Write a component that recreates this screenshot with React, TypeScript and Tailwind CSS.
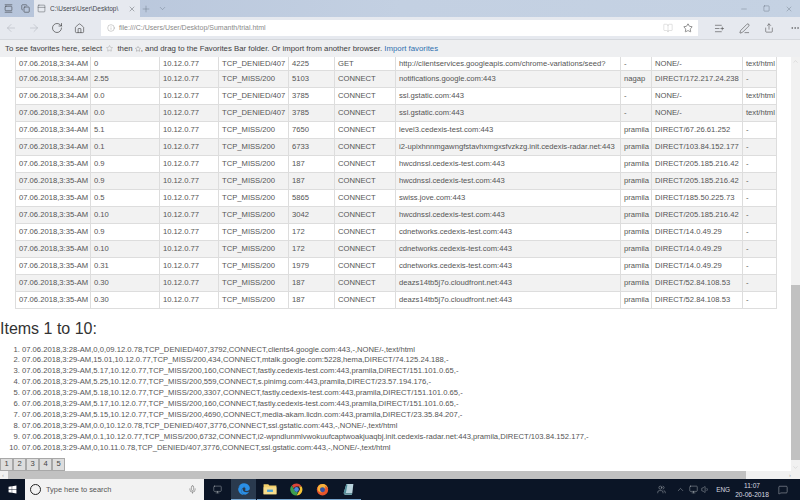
import React from 'react';
import {
  ArrowLeft, ArrowRight, RotateCw, Home, Info, BookOpen, Star, Share, MoreHorizontal, X, Plus, ChevronDown,
  ChevronUp, Minus, Square, Mic, PenLine, ListPlus, Volume1, MessageSquare, Users, Monitor, PanelTop, Copy, GalleryVertical,
} from 'lucide-react';
import { FaEdge, FaWindows } from 'react-icons/fa';

const rows = [
  ['07.06.2018,3:34-AM', '0', '10.12.0.77', 'TCP_DENIED/407', '4225', 'GET', 'http://clientservices.googleapis.com/chrome-variations/seed?', '-', 'NONE/-', 'text/html'],
  ['07.06.2018,3:34-AM', '2.55', '10.12.0.77', 'TCP_MISS/200', '5103', 'CONNECT', 'notifications.google.com:443', 'nagap', 'DIRECT/172.217.24.238', '-'],
  ['07.06.2018,3:34-AM', '0.0', '10.12.0.77', 'TCP_DENIED/407', '3785', 'CONNECT', 'ssl.gstatic.com:443', '-', 'NONE/-', 'text/html'],
  ['07.06.2018,3:34-AM', '0.0', '10.12.0.77', 'TCP_DENIED/407', '3785', 'CONNECT', 'ssl.gstatic.com:443', '-', 'NONE/-', 'text/html'],
  ['07.06.2018,3:34-AM', '5.1', '10.12.0.77', 'TCP_MISS/200', '7650', 'CONNECT', 'level3.cedexis-test.com:443', 'pramila', 'DIRECT/67.26.61.252', '-'],
  ['07.06.2018,3:34-AM', '0.1', '10.12.0.77', 'TCP_MISS/200', '6733', 'CONNECT', 'i2-upixhnnmgawngfstavhxmgxsfvzkzg.init.cedexis-radar.net:443', 'pramila', 'DIRECT/103.84.152.177', '-'],
  ['07.06.2018,3:35-AM', '0.9', '10.12.0.77', 'TCP_MISS/200', '187', 'CONNECT', 'hwcdnssl.cedexis-test.com:443', 'pramila', 'DIRECT/205.185.216.42', '-'],
  ['07.06.2018,3:35-AM', '0.9', '10.12.0.77', 'TCP_MISS/200', '187', 'CONNECT', 'hwcdnssl.cedexis-test.com:443', 'pramila', 'DIRECT/205.185.216.42', '-'],
  ['07.06.2018,3:35-AM', '0.5', '10.12.0.77', 'TCP_MISS/200', '5865', 'CONNECT', 'swiss.jove.com:443', 'pramila', 'DIRECT/185.50.225.73', '-'],
  ['07.06.2018,3:35-AM', '0.10', '10.12.0.77', 'TCP_MISS/200', '3042', 'CONNECT', 'hwcdnssl.cedexis-test.com:443', 'pramila', 'DIRECT/205.185.216.42', '-'],
  ['07.06.2018,3:35-AM', '0.9', '10.12.0.77', 'TCP_MISS/200', '172', 'CONNECT', 'cdnetworks.cedexis-test.com:443', 'pramila', 'DIRECT/14.0.49.29', '-'],
  ['07.06.2018,3:35-AM', '0.10', '10.12.0.77', 'TCP_MISS/200', '172', 'CONNECT', 'cdnetworks.cedexis-test.com:443', 'pramila', 'DIRECT/14.0.49.29', '-'],
  ['07.06.2018,3:35-AM', '0.31', '10.12.0.77', 'TCP_MISS/200', '1979', 'CONNECT', 'cdnetworks.cedexis-test.com:443', 'pramila', 'DIRECT/14.0.49.29', '-'],
  ['07.06.2018,3:35-AM', '0.30', '10.12.0.77', 'TCP_MISS/200', '187', 'CONNECT', 'deazs14tb5j7o.cloudfront.net:443', 'pramila', 'DIRECT/52.84.108.53', '-'],
  ['07.06.2018,3:35-AM', '0.30', '10.12.0.77', 'TCP_MISS/200', '187', 'CONNECT', 'deazs14tb5j7o.cloudfront.net:443', 'pramila', 'DIRECT/52.84.108.53', '-'],
];

const colWidths = [75, 69, 59, 70, 46, 61, 225, 31, 91, 34];

const items = [
  '07.06.2018,3:28-AM,0,0,09.12.0.78,TCP_DENIED/407,3792,CONNECT,clients4.google.com:443,-,NONE/-,text/html',
  '07.06.2018,3:29-AM,15.01,10.12.0.77,TCP_MISS/200,434,CONNECT,mtalk.google.com:5228,hema,DIRECT/74.125.24.188,-',
  '07.06.2018,3:29-AM,5.17,10.12.0.77,TCP_MISS/200,160,CONNECT,fastly.cedexis-test.com:443,pramila,DIRECT/151.101.0.65,-',
  '07.06.2018,3:29-AM,5.25,10.12.0.77,TCP_MISS/200,559,CONNECT,s.pinimg.com:443,pramila,DIRECT/23.57.194.176,-',
  '07.06.2018,3:29-AM,5.18,10.12.0.77,TCP_MISS/200,3307,CONNECT,fastly.cedexis-test.com:443,pramila,DIRECT/151.101.0.65,-',
  '07.06.2018,3:29-AM,5.17,10.12.0.77,TCP_MISS/200,160,CONNECT,fastly.cedexis-test.com:443,pramila,DIRECT/151.101.0.65,-',
  '07.06.2018,3:29-AM,5.15,10.12.0.77,TCP_MISS/200,4690,CONNECT,media-akam.licdn.com:443,pramila,DIRECT/23.35.84.207,-',
  '07.06.2018,3:29-AM,0.0,10.12.0.78,TCP_DENIED/407,3776,CONNECT,ssl.gstatic.com:443,-,NONE/-,text/html',
  '07.06.2018,3:29-AM,0.1,10.12.0.77,TCP_MISS/200,6732,CONNECT,i2-wpndlunmlvwokuufcaptwoakjuaqbj.init.cedexis-radar.net:443,pramila,DIRECT/103.84.152.177,-',
  '07.06.2018,3:29-AM,0,10.11.0.78,TCP_DENIED/407,3776,CONNECT,ssl.gstatic.com:443,-,NONE/-,text/html',
];

const ChromeLogo = () => (
  <svg viewBox="0 0 24 24" className="w-[13px] h-[13px]">
    <path d="M12 1a11 11 0 0 1 9.5 5.5H12a5.5 5.5 0 0 0-5.2 3.6L3.4 4.6A11 11 0 0 1 12 1z" fill="#d9453a" />
    <path d="M21.5 6.5A11 11 0 0 1 12 23l4.8-8.2a5.5 5.5 0 0 0-.7-8.3z" fill="#f3c335" />
    <path d="M12 23A11 11 0 0 1 3.4 4.6l4.8 8.6a5.5 5.5 0 0 0 6.3 3.2z" fill="#3d9e4f" />
    <circle cx="12" cy="12" r="4.4" fill="#4a89dc" />
  </svg>
);

const FirefoxLogo = () => (
  <svg viewBox="0 0 24 24" className="w-[13px] h-[13px]">
    <circle cx="12" cy="12.5" r="10.5" fill="#e8552b" />
    <path d="M4 6c2-4 7-5 10-4 4 1 7 4 8 8-2-3-4-4-6-4 1 1 2 3 1 5-2-2-6-2-8 0-1 2 0 5 3 6-4 1-8-1-9-5-.5-2 0-4 1-6z" fill="#f7b23b" />
    <circle cx="12" cy="12.5" r="4.6" fill="#3553a4" />
  </svg>
);

const ExplorerLogo = () => (
  <svg viewBox="0 0 24 24" className="w-[14px] h-[14px]">
    <path d="M1 4h8l2 2h12v15H1z" fill="#f3cf6a" />
    <rect x="1" y="9" width="22" height="12" fill="#f7dd8d" />
    <rect x="7" y="13" width="10" height="4" fill="#4aa3d8" />
  </svg>
);

const NotesLogo = () => (
  <svg viewBox="0 0 24 24" className="w-[13px] h-[13px]">
    <path d="M8 2h13l-2 17H3z" fill="#b9d3dc" />
    <path d="M3 19l5-17 2 1-3 16z" fill="#4c8a96" />
    <path d="M3 19h16l-1 3H5z" fill="#6f9fa8" />
  </svg>
);

const stroke = 1.3;

export default function App() {
  return (
    <div className="w-[800px] h-[500px] overflow-hidden flex flex-col bg-white font-['Liberation_Sans',Arial,sans-serif]">
      {/* tab strip */}
      <div className="h-[17px] flex items-center bg-gradient-to-r from-[#b6c4da] via-[#c3d0e2] to-[#c5d2e3] text-[#44484f]">
        <div className="w-[17px] flex justify-center"><GalleryVertical size={9} strokeWidth={1.6} /></div>
        <div className="w-[17px] flex justify-center"><Copy size={9} strokeWidth={1.6} /></div>
        <div className="h-full w-[106px] bg-[#e6e9ef] flex items-center pl-[3px] gap-[4px]">
          <PanelTop size={9} strokeWidth={1.2} />
          <span className="text-[6.5px] w-[74px] overflow-hidden whitespace-nowrap">C:\Users\User\Desktop\</span>
          <X size={8} strokeWidth={1.2} />
        </div>
        <Plus size={10} strokeWidth={1} className="ml-px text-[#5f6b7c]" />
        <ChevronDown size={9} strokeWidth={1} className="ml-[7px] text-[#5f6b7c]" />
        <div className="ml-auto flex items-center gap-[15px] pr-[7px] text-[#56606e]">
          <Minus size={8} strokeWidth={1} />
          <Square size={7} strokeWidth={1.2} />
          <X size={8} strokeWidth={1} />
        </div>
      </div>
      {/* address bar */}
      <div className="h-[23px] flex items-center bg-[#e6e9ef] text-[#3a3a3a] border-b border-[#d5d8dd]">
        <div className="flex items-center gap-[11px] pl-[5px] w-[101px]">
          <ArrowLeft size={12} strokeWidth={1} className="text-[#a9adb4]" />
          <ArrowRight size={12} strokeWidth={1} className="text-[#a9adb4]" />
          <RotateCw size={12} strokeWidth={stroke} />
          <Home size={11} strokeWidth={stroke} />
        </div>
        <div className="w-[597px] h-[16px] bg-white flex items-center pl-[6px] gap-[4px]">
          <Info size={8} strokeWidth={1} className="text-[#777]" />
          <span className="text-[7px] text-[#8a8a8a]">file:///C:/Users/User/Desktop/Sumanth/trial.html</span>
          <BookOpen size={10} strokeWidth={1} className="ml-auto text-[#b8b8b8]" />
          <Star size={10} strokeWidth={1.3} className="ml-[6px] mr-[5px]" />
        </div>
        <div className="flex items-center gap-[14px] pl-[16px]">
          <ListPlus size={11} strokeWidth={1.2} />
          <PenLine size={11} strokeWidth={1.2} />
          <Share size={10} strokeWidth={1.2} />
          <MoreHorizontal size={10} strokeWidth={1.2} className="ml-[2px]" />
        </div>
      </div>
      {/* favorites hint */}
      <div className="h-[17px] flex items-center pl-[5px] bg-[#eeeff1] text-[7.8px] text-[#3d3d3d] whitespace-nowrap">
        To see favorites here, select&nbsp;<Star size={7} strokeWidth={1} className="mx-[2px] text-[#777]" />&nbsp;then&nbsp;<Star size={6} strokeWidth={1.2} className="text-[#555]" />, and drag to the Favorites Bar folder. Or import from another browser.&nbsp;
        <span className="text-[#2f6fb0]">Import favorites</span>
      </div>

      <div className="flex-1 flex min-h-0">
        {/* page */}
        <div className="flex-1 min-w-0 overflow-hidden text-[#555]">
          <table className="ml-[15px] table-fixed border-collapse text-[7.65px] w-[761px]">
            <colgroup>
              {colWidths.map((w, i) => <col key={i} style={{ width: w }} />)}
            </colgroup>
            <tbody>
              {rows.map((r, i) => (
                <tr key={i} className={`${i === 0 ? 'h-[13px]' : 'h-[17px]'} ${i % 2 === 1 ? 'bg-[#f2f2f2]' : 'bg-white'}`}>
                  {r.map((c, j) => (
                    <td key={j} className={`border border-[#dddddd] pl-[3px] p-0 whitespace-nowrap overflow-hidden ${i === 0 ? 'border-t-0' : ''}`}>{c}</td>
                  ))}
                </tr>
              ))}
            </tbody>
          </table>

          <h2 className="mt-[10px] text-[16px] leading-[20px] text-[#333]">Items 1 to 10:</h2>
          <ol className="list-decimal pl-[22px] mt-[6px] text-[7.65px] leading-[10.9px]">
            {items.map((t, i) => <li key={i} className="whitespace-nowrap">{t}</li>)}
          </ol>
          <div className="flex mt-[4px] h-[13px]">
            {[1, 2, 3, 4, 5].map((n) => (
              <span key={n} className="w-[13px] flex items-center justify-center bg-[#dddddd] border border-[#a8a8a8] text-[7.6px] text-[#444]">{n}</span>
            ))}
          </div>
        </div>
        {/* vertical scrollbar */}
        <div className="w-[9px] flex flex-col bg-[#f1f1f1] items-center">
          <ChevronUp size={7} strokeWidth={1} className="mt-px text-[#aaa]" />
          <div className="mt-[220px] w-full h-[175px] bg-[#c1c1c1]" />
          <ChevronDown size={7} strokeWidth={1} className="mt-auto text-[#aaa]" />
        </div>
      </div>

      {/* horizontal scrollbar */}
      <div className="h-[8px] flex items-center bg-[#f1f1f1]">
        <div className="w-[8px] text-[6px] leading-none text-[#aaa] pl-[2px]">‹</div>
        <div className="w-[738px] h-full bg-[#c1c1c1]" />
        <div className="ml-auto mr-[9px] text-[6px] leading-none text-[#aaa]">›</div>
      </div>

      {/* taskbar */}
      <div className="h-[21px] flex items-center bg-[#0b1526] text-[#d8dbe0]">
        <div className="w-[25px] flex justify-center text-white"><FaWindows size={9} /></div>
        <div className="w-[179px] h-full bg-[#f2f2f2] flex items-center pl-[5px] gap-[5px] text-[#555]">
          <div className="w-[11px] h-[11px] rounded-full border-[1.5px] border-[#222]" />
          <span className="text-[7.4px]">Type here to search</span>
          <Mic size={9} strokeWidth={1.3} className="ml-auto mr-[7px]" />
        </div>
        <div className="w-[27px] flex justify-center"><Monitor size={9} strokeWidth={1} /></div>
        <div className="w-[25px] h-full bg-[#2a3a4e] flex items-center justify-center border-b border-[#7aa7d0] text-[#2a8fe6]"><FaEdge size={12} /></div>
        <div className="w-[26px] h-full flex items-center justify-center border-b border-[#7aa7d0] ml-px"><ExplorerLogo /></div>
        <div className="w-[26px] h-full flex items-center justify-center border-b border-[#7aa7d0]"><ChromeLogo /></div>
        <div className="w-[26px] h-full flex items-center justify-center border-b border-[#7aa7d0]"><FirefoxLogo /></div>
        <div className="w-[26px] h-full flex items-center justify-center border-b border-[#7aa7d0]"><NotesLogo /></div>
        <div className="ml-auto flex items-center">
          <Users size={9} strokeWidth={1} className="mr-[10px]" />
          <ChevronUp size={9} strokeWidth={1} className="mr-[4px]" />
          <Monitor size={9} strokeWidth={1} className="mr-[3px]" />
          <Volume1 size={9} strokeWidth={1} className="mr-[6px]" />
          <span className="text-[6.4px]">ENG</span>
          <div className="ml-[4px] w-[36px] flex flex-col items-center text-[6.6px] leading-[9px] whitespace-nowrap">
            <span>11:07</span>
            <span>20-06-2018</span>
          </div>
          <MessageSquare size={10} strokeWidth={1} className="ml-[8px] mr-[12px]" />
        </div>
      </div>
    </div>
  );
}
